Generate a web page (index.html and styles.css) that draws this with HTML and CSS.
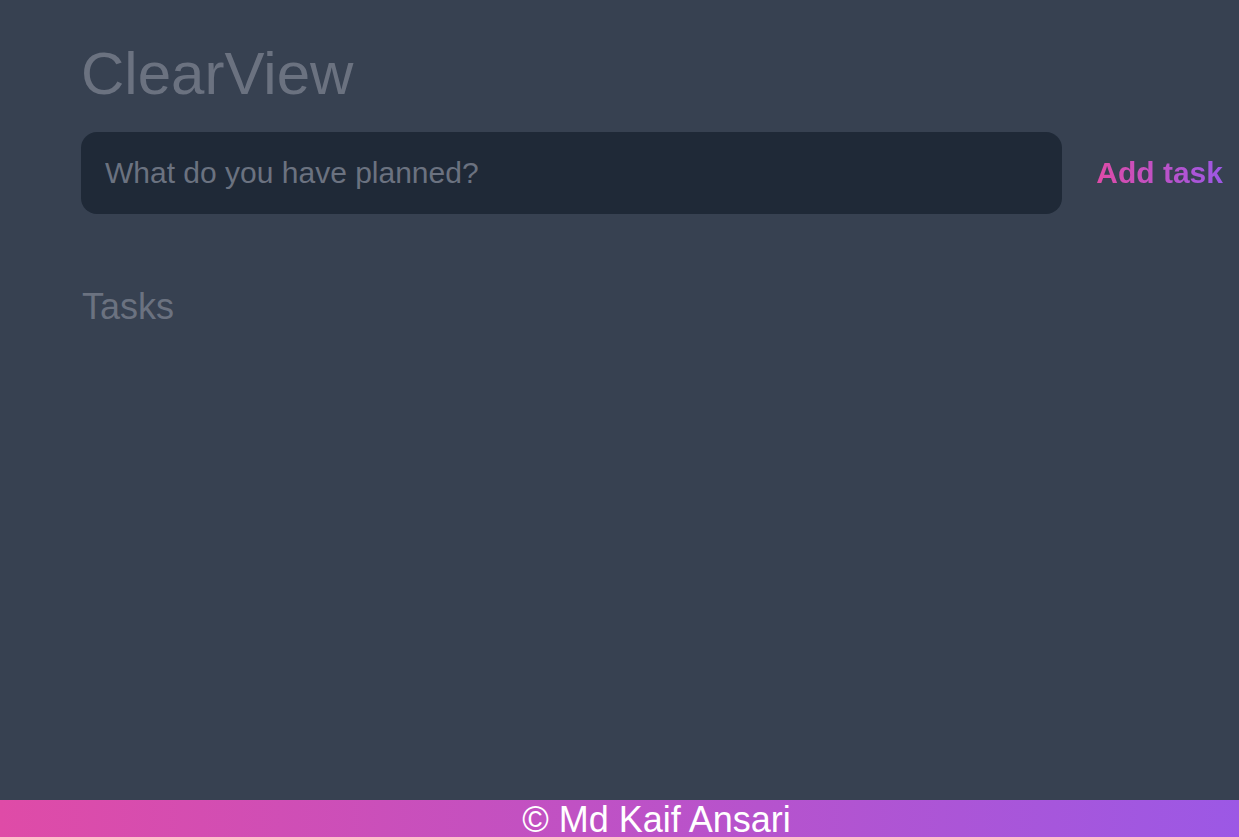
FILE: index.html
```html
<!DOCTYPE html>
<html lang="en">
<head>
<meta charset="utf-8">
<title>ClearView</title>
<link rel="stylesheet" href="styles.css">
</head>
<body>
<div class="page">
  <main class="main">
    <h1 class="title">ClearView</h1>
    <form class="task-form">
      <input class="task-input" type="text" placeholder="What do you have planned?">
      <button class="add-btn" type="button">Add task</button>
    </form>
    <h2 class="tasks-heading">Tasks</h2>
  </main>
  <footer class="footer">© Md Kaif Ansari</footer>
</div>
</body>
</html>
```
FILE: styles.css
```css
* { box-sizing: border-box; }
html, body { margin: 0; padding: 0; }
body {
  background: #374151;
  font-family: "Liberation Sans", Arial, sans-serif;
  color: #6b7280;
}
.page {
  min-height: 837px;
  display: flex;
  flex-direction: column;
}
.main {
  flex: 1;
  padding: 44px 16px 0 81px;
}
.title {
  margin: 0;
  font-size: 60px;
  line-height: 60px;
  font-weight: 400;
  color: #6b7280;
}
.task-form {
  margin: 28px 0 0 0;
  display: flex;
  align-items: center;
  gap: 34px;
}
.task-input {
  flex: 1;
  height: 82px;
  border: none;
  outline: none;
  border-radius: 16px;
  background: #1f2937;
  padding: 0 24px;
  font-family: "Liberation Sans", Arial, sans-serif;
  font-size: 30px;
  color: #d1d5db;
}
.task-input::placeholder { color: #6b7280; }
.add-btn {
  border: none;
  background: linear-gradient(90deg, #df4ba7, #9c58e5);
  -webkit-background-clip: text;
  background-clip: text;
  color: transparent;
  font-family: "Liberation Sans", Arial, sans-serif;
  font-weight: 700;
  font-size: 30px;
  padding: 0;
  cursor: pointer;
}
.tasks-heading {
  margin: 71px 0 0 1px;
  font-size: 36px;
  line-height: 1.2;
  font-weight: 400;
  color: #6b7280;
}
.footer {
  height: 37px;
  line-height: 40px;
  padding-left: 74px;
  text-align: center;
  font-size: 36px;
  color: #ffffff;
  background: linear-gradient(90deg, #df4ba7, #9c58e5);
  overflow: hidden;
}
```
